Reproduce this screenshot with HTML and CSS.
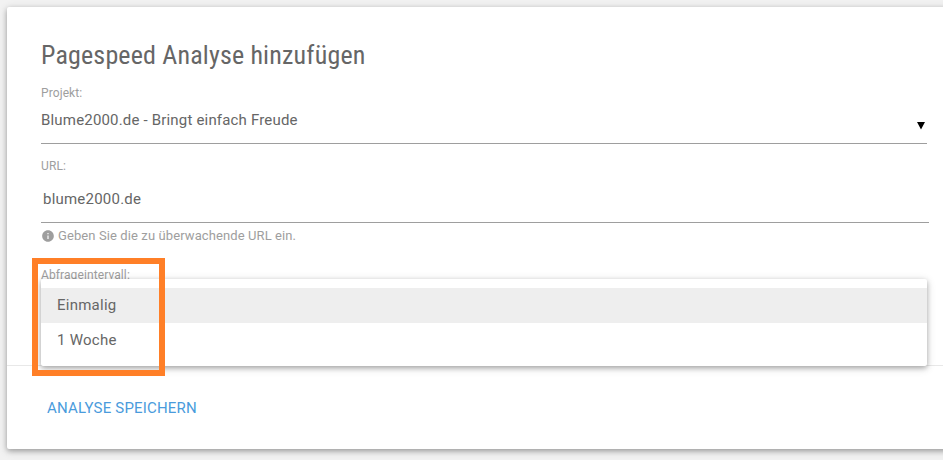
FILE: index.html
```
<!DOCTYPE html>
<html lang="de">
<head>
    <meta charset="UTF-8">
    <meta name="viewport" content="width=device-width, initial-scale=1.0">
    <title>Pagespeed Analyse hinzufügen</title>
    <link rel="stylesheet" href="styles.css">
</head>
<body>

<div class="card">
    <div class="card-content">
        <h1 class="card-title">Pagespeed Analyse hinzufügen</h1>

        <div class="field field-project">
            <label>Projekt:</label>
            <div class="select">
                <span>Blume2000.de - Bringt einfach Freude</span>
                <svg class="caret" width="8" height="8" viewBox="0 0 8 8"><path d="M0 0h8L4 7.5z"/></svg>
            </div>
        </div>

        <div class="field field-url">
            <label for="url">URL:</label>
            <input type="text" id="url" value="blume2000.de">
            <div class="hint">
                <svg width="13" height="13" viewBox="0 0 24 24"><path d="M12 2C6.480 2 2 6.480 2 12s4.480 10 10 10 10-4.480 10-10S17.520 2 12 2zm1 15h-2v-6h2v6zm0-8h-2V7h2v2z"/></svg>
                <span>Geben Sie die zu überwachende URL ein.</span>
            </div>
        </div>

        <div class="field field-interval">
            <label>Abfrageintervall:</label>
            <ul class="dropdown">
                <li class="active">Einmalig</li>
                <li>1 Woche</li>
            </ul>
            <div class="marker"></div>
        </div>
    </div>

    <div class="card-action">
        <a href="#">Analyse speichern</a>
    </div>
</div>

</body>
</html>
```
FILE: styles.css
```
* {
    box-sizing: border-box;
}

body {
    margin: 0;
    padding: 7px 0 0 7px;
    height: 460px;
    overflow: hidden;
    background-color: #f2f2f2;
    font-family: Roboto, "Liberation Sans", sans-serif;
    font-size: 15px;
    color: #666;
}

.card {
    width: 956px;
    height: 442px;
    background-color: #fff;
    border-radius: 2px;
    box-shadow: 0 2px 5px 0 rgba(0, 0, 0, 0.26), 0 2px 10px 0 rgba(0, 0, 0, 0.16);
}

.card-content {
    height: 358px;
    padding: 30px 36px 0 34px;
}

.card-title {
    margin: 0;
    height: 48px;
    line-height: 36px;
    font-family: "Roboto Condensed", Roboto, sans-serif;
    font-size: 26px;
    font-weight: 400;
    font-stretch: 75%;
    letter-spacing: 0.16px;
    white-space: nowrap;
}

.field {
    position: relative;
    width: 886px;
}

.field label {
    display: block;
    height: 16px;
    line-height: 16px;
    font-size: 12px;
    letter-spacing: 0.1px;
    color: #9e9e9e;
}

.field-project {
    height: 73px;
}

.select {
    display: flex;
    justify-content: space-between;
    height: 43px;
    line-height: 38px;
    border-bottom: 1px solid #9e9e9e;
    letter-spacing: 0.18px;
}

.caret {
    margin: 21px 2px 0 0;
    fill: #000;
}

.field-url {
    height: 109px;
}

.field-url input {
    display: block;
    width: 888px;
    height: 49px;
    padding: 2px 2px 0;
    border: none;
    border-bottom: 1px solid #9e9e9e;
    outline: none;
    background: none;
    font-family: inherit;
    font-size: 15px;
    letter-spacing: 0.22px;
    color: #666;
}

.hint {
    display: flex;
    align-items: center;
    height: 25px;
    font-size: 13px;
    letter-spacing: 0.1px;
    color: #9e9e9e;
}

.hint svg {
    width: 14px;
    height: 14px;
    margin-right: 3px;
    fill: #9e9e9e;
}

.dropdown {
    position: absolute;
    top: 12px;
    left: 0;
    width: 886px;
    height: 87px;
    margin: 0;
    padding: 9px 0 8px;
    list-style: none;
    background-color: #fff;
    border-radius: 2px;
    box-shadow: 0 2px 5px 0 rgba(0, 0, 0, 0.26), 0 2px 10px 0 rgba(0, 0, 0, 0.16);
}

.dropdown li {
    height: 35px;
    padding: 0 16px;
    line-height: 34px;
    letter-spacing: 0.25px;
}

.dropdown .active {
    background-color: #eee;
}

/* Hervorhebung um die Auswahl */
.marker {
    position: absolute;
    top: -9px;
    left: -9px;
    width: 133px;
    height: 118px;
    border: 6px solid #ff7f27;
}

.card-action {
    height: 84px;
    padding: 0 40px;
    line-height: 84px;
    border-top: 1px solid #e8e8e8;
}

.card-action a {
    color: #4a9bdc;
    letter-spacing: 0.19px;
    text-decoration: none;
    text-transform: uppercase;
}
```
